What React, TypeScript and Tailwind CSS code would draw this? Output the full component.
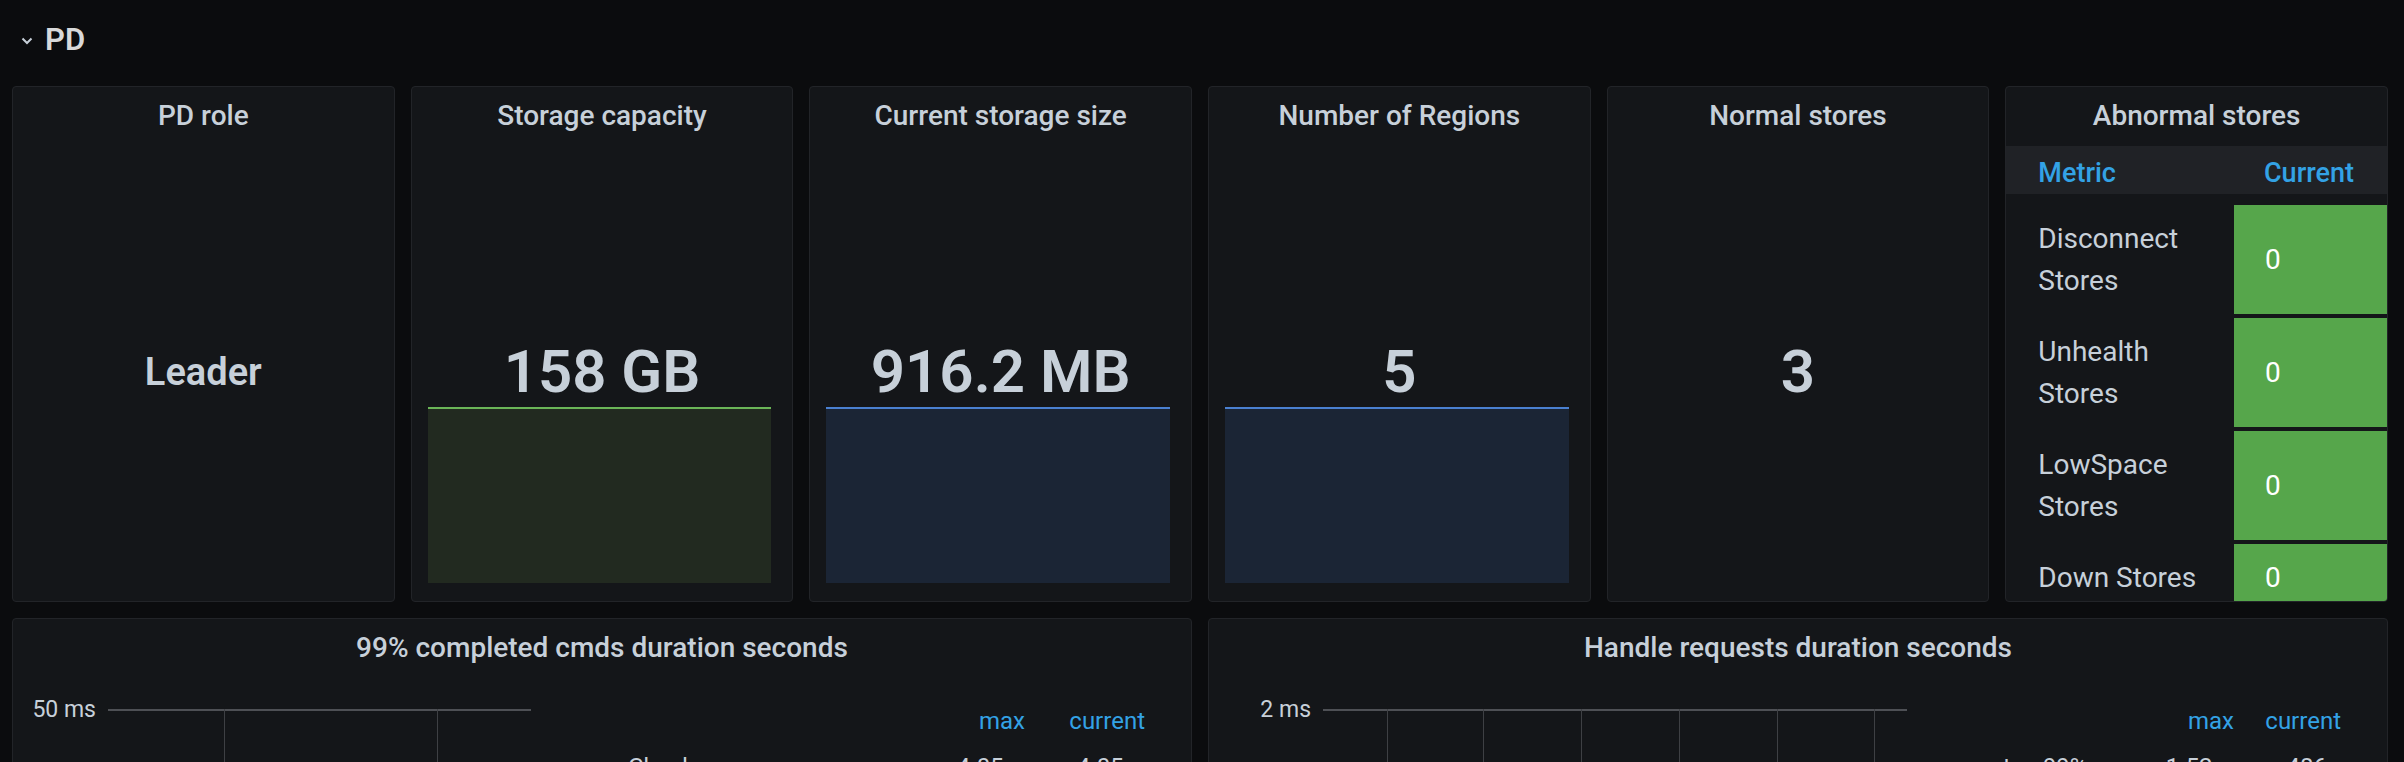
import React from 'react';

const font = { fontFamily: 'Roboto, "Liberation Sans", sans-serif' };

function PanelTitle({ title }: { title: string }) {
  return (
    <div className="h-[46px] pt-[13px] text-center text-[28px] leading-[32px] font-medium text-[#c7d0d9] whitespace-nowrap">
      {title}
    </div>
  );
}

function StatPanel({
  title,
  value,
  small,
  spark,
}: {
  title: string;
  value: string;
  small?: boolean;
  spark?: 'green' | 'blue';
}) {
  return (
    <div className="flex flex-col overflow-hidden rounded-[4px] border border-[#222428] bg-[#141619]">
      <PanelTitle title={title} />
      <div
        className={
          'mt-[208px] flex h-[62px] items-center justify-center font-semibold text-[#c7d0d9] leading-[62px] whitespace-nowrap ' +
          (small ? 'text-[38px]' : 'text-[60px]')
        }
      >
        {value}
      </div>
      {spark === 'green' && (
        <div className="ml-[16px] mr-[21px] mt-[4px] h-[176px] border-t-2 border-[#6ab557] bg-[#222a20]" />
      )}
      {spark === 'blue' && (
        <div className="ml-[16px] mr-[21px] mt-[4px] h-[176px] border-t-2 border-[#4a80d0] bg-[#1b2535]" />
      )}
    </div>
  );
}

const abnormal = [
  { name: 'Disconnect Stores', value: '0' },
  { name: 'Unhealth Stores', value: '0' },
  { name: 'LowSpace Stores', value: '0' },
  { name: 'Down Stores', value: '0' },
];

function AbnormalPanel() {
  return (
    <div className="flex flex-col overflow-hidden rounded-[4px] border border-[#222428] bg-[#141619]">
      <PanelTitle title="Abnormal stores" />
      <div className="mt-[14px] flex h-[48px] shrink-0 items-center bg-[#202226] pt-[6px] text-[27px] font-medium text-[#33a2e5]">
        <div className="flex-1 pl-[32px]">Metric</div>
        <div className="w-[153px] pl-[30px]">Current</div>
      </div>
      <div className="mt-[11px]">
        {abnormal.map((row) => (
          <div key={row.name} className="mb-[4px] flex">
            <div className="flex-1 py-[12.5px] pl-[32px] pr-[16px] text-[28px] leading-[42px] text-[#c7d0d9]">
              {row.name}
            </div>
            <div className="flex w-[153px] items-center bg-[#56a64b] pl-[31px] text-[28px] text-white">
              {row.value}
            </div>
          </div>
        ))}
      </div>
    </div>
  );
}

type GraphProps = {
  title: string;
  axis: string;
  axisW: number;
  lineW: number;
  vlines: number[];
  legendName: string;
  nameW: number;
  maxVal: string;
  curVal: string;
  maxW: number;
  curW: number;
};

function GraphPanel(p: GraphProps) {
  return (
    <div className="h-[300px] overflow-hidden rounded-[4px] border border-[#222428] bg-[#141619]">
      <PanelTitle title={p.title} />
      <div className="mt-[33px] flex items-start">
        <div
          className="shrink-0 text-right text-[23px] leading-[23px] text-[#c7d0d9]"
          style={{ width: p.axisW }}
        >
          {p.axis}
        </div>
        <svg className="ml-[12px] mt-[11px] shrink-0" width={p.lineW} height={120}>
          <line x1={0} y1={1} x2={p.lineW} y2={1} stroke="#4e5055" strokeWidth={2} />
          {p.vlines.map((x) => (
            <line key={x} x1={x + 0.5} y1={0} x2={x + 0.5} y2={120} stroke="#3e4044" strokeWidth={1} />
          ))}
        </svg>
        <div className="flex-1" />
        <div className="pr-[28px] text-[24px] leading-[46px]">
          <div className="flex text-[#33a2e5]">
            <div style={{ width: p.nameW }} />
            <div className="pr-[18px] text-right" style={{ width: p.maxW }}>max</div>
            <div className="pr-[18px] text-right" style={{ width: p.curW }}>current</div>
          </div>
          <div className="flex text-[#c7d0d9]">
            <div className="whitespace-nowrap" style={{ width: p.nameW }}>{p.legendName}</div>
            <div className="text-right whitespace-nowrap" style={{ width: p.maxW }}>{p.maxVal}</div>
            <div className="text-right whitespace-nowrap" style={{ width: p.curW }}>{p.curVal}</div>
          </div>
        </div>
      </div>
    </div>
  );
}

export default function App() {
  return (
    <div className="h-[762px] w-full overflow-hidden bg-[#0b0c0e] pl-[12px] pr-[16px]" style={font}>
      <div className="flex h-[86px] items-start pt-[24px]">
        <svg className="ml-[9px] mt-[13px]" width="12" height="8" viewBox="0 0 12 8">
          <polyline points="1.5,1.5 6,6 10.5,1.5" fill="none" stroke="#c7d0d9" strokeWidth="2" />
        </svg>
        <div className="ml-[12px] text-[31px] leading-[32px] font-semibold text-[#d8d9da]">PD</div>
      </div>
      <div className="grid h-[516px] grid-cols-6 gap-x-[16px]">
        <StatPanel title="PD role" value="Leader" small />
        <StatPanel title="Storage capacity" value="158 GB" spark="green" />
        <StatPanel title="Current storage size" value="916.2 MB" spark="blue" />
        <StatPanel title="Number of Regions" value="5" spark="blue" />
        <StatPanel title="Normal stores" value="3" />
        <AbnormalPanel />
      </div>
      <div className="mt-[16px] grid grid-cols-2 gap-x-[16px]">
        <GraphPanel
          title="99% completed cmds duration seconds"
          axis="50 ms"
          axisW={83}
          lineW={423}
          vlines={[116, 329]}
          legendName="Check"
          nameW={295}
          maxVal="4.05 ms"
          curVal="4.05 ms"
          maxW={120}
          curW={120}
        />
        <GraphPanel
          title="Handle requests duration seconds"
          axis="2 ms"
          axisW={102}
          lineW={584}
          vlines={[64, 160, 258, 356, 454, 551]}
          legendName="tso 99%"
          nameW={149}
          maxVal="1.52 ms"
          curVal="486 µs"
          maxW={100}
          curW={107}
        />
      </div>
    </div>
  );
}
